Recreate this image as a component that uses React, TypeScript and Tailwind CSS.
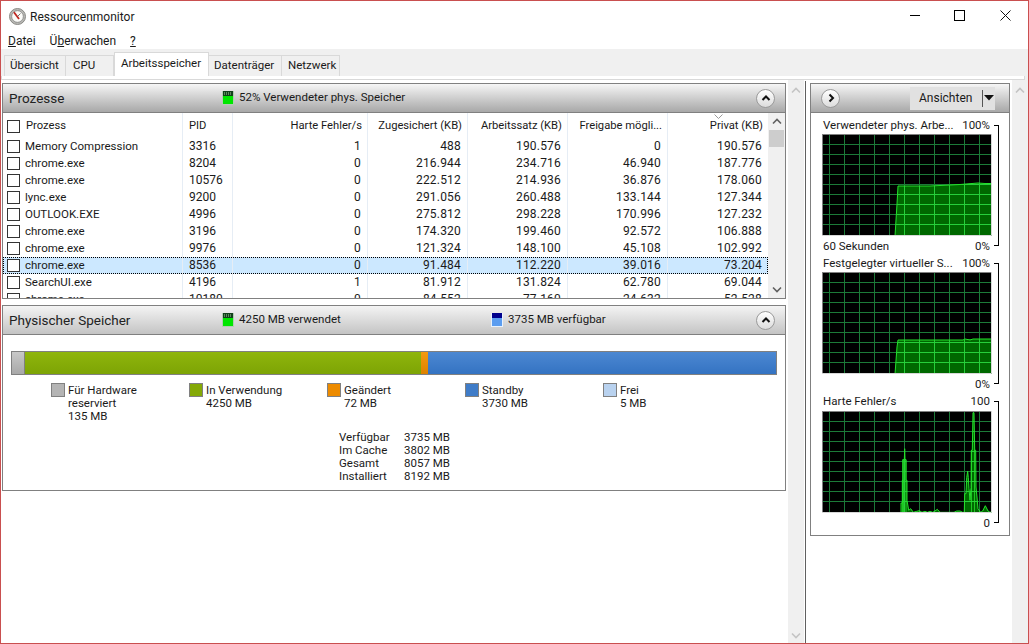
import { ReactNode } from "react";

const rows = [
  ["Memory Compression", "3316", "1", "488", "190.576", "0", "190.576"],
  ["chrome.exe", "8204", "0", "216.944", "234.716", "46.940", "187.776"],
  ["chrome.exe", "10576", "0", "222.512", "214.936", "36.876", "178.060"],
  ["lync.exe", "9200", "0", "291.056", "260.488", "133.144", "127.344"],
  ["OUTLOOK.EXE", "4996", "0", "275.812", "298.228", "170.996", "127.232"],
  ["chrome.exe", "3196", "0", "174.320", "199.460", "92.572", "106.888"],
  ["chrome.exe", "9976", "0", "121.324", "148.100", "45.108", "102.992"],
  ["chrome.exe", "8536", "0", "91.484", "112.220", "39.016", "73.204"],
  ["SearchUI.exe", "4196", "1", "81.912", "131.824", "62.780", "69.044"],
  ["chrome.exe", "10180", "0", "84.552", "77.160", "24.632", "52.528"],
];

const columns = ["PID", "Harte Fehler/s", "Zugesichert (KB)", "Arbeitssatz (KB)", "Freigabe mögli...", "Privat (KB)"];

const legend = [
  { color: "bg-[#b4b4b4]", lines: ["Für Hardware", "reserviert", "135 MB"] },
  { color: "bg-[#84a907]", lines: ["In Verwendung", "4250 MB"] },
  { color: "bg-[#ed8b00]", lines: ["Geändert", "72 MB"] },
  { color: "bg-[#3f7cc8]", lines: ["Standby", "3730 MB"] },
  { color: "bg-[#b9d2ef]", lines: ["Frei", "5 MB"] },
];

const stats = [
  ["Verfügbar", "3735 MB"],
  ["Im Cache", "3802 MB"],
  ["Gesamt", "8057 MB"],
  ["Installiert", "8192 MB"],
];

const Checkbox = () => <span className="block w-[13px] h-[13px] border border-[#333] bg-white shrink-0" />;

const Gauge = ({ blue }: { blue?: boolean }) => (
  <svg width="12" height="14" viewBox="0 0 12 14" className="shrink-0">
    <rect width="12" height="14" fill={blue ? "#e8f2fd" : "#b4ccb4"} />
    <rect x="1" y="0" width="10" height="5" fill={blue ? "#00008c" : "#12401c"} />
    <rect x="1" y="5" width="10" height="8" fill={blue ? "#5b9df0" : "#00e600"} />
    {!blue && [2, 4, 6, 8].map((x) => <rect key={x} x={x} y="1" width="1" height="3" fill="#5c8a5c" />)}
  </svg>
);

const RoundButton = ({ up }: { up?: boolean }) => (
  <span className="flex items-center justify-center w-[19px] h-[19px] rounded-full border border-[#9a9a9a] bg-gradient-to-b from-white to-[#dcdcdc]">
    <svg width="10" height="10" viewBox="0 0 10 10" fill="none" stroke="#111" strokeWidth="2">
      {up ? <path d="M1.5 7 5 3.5 8.5 7" /> : <path d="M3.5 1.5 7 5 3.5 8.5" />}
    </svg>
  </span>
);

const Chevron = ({ down, light }: { down?: boolean; light?: boolean }) => (
  <svg width="10" height="7" viewBox="0 0 10 7" fill="none" stroke={light ? "#c4c4c4" : "#606060"} strokeWidth="1.6" className="block">
    {down ? <path d="M1 1.5 5 5.5 9 1.5" /> : <path d="M1 5.5 5 1.5 9 5.5" />}
  </svg>
);

const gridX = [7, 22, 37, 52, 67, 82, 97, 112, 127, 142, 157];
const gridY = [10, 20, 30, 40, 50, 60, 70, 80, 90];

const Graph = ({ id, area, line, extra }: { id: string; area: string; line: string; extra?: ReactNode }) => (
  <svg width="170" height="102" viewBox="0 0 170 102" className="block bg-black">
    <defs>
      <clipPath id={id}>
        <path d={area} />
      </clipPath>
    </defs>
    {gridX.map((x) => (
      <line key={x} x1={x + 0.5} y1="0" x2={x + 0.5} y2="102" stroke="#1c7a38" />
    ))}
    {gridY.map((y) => (
      <line key={y} x1="0" y1={y + 0.5} x2="170" y2={y + 0.5} stroke="#1c7a38" />
    ))}
    <path d={area} fill="#006800" />
    <g clipPath={`url(#${id})`}>
      {gridX.map((x) => (
        <line key={x} x1={x + 0.5} y1="0" x2={x + 0.5} y2="102" stroke="#26cf3a" />
      ))}
      {gridY.map((y) => (
        <line key={y} x1="0" y1={y + 0.5} x2="170" y2={y + 0.5} stroke="#26cf3a" />
      ))}
    </g>
    {extra}
    <path d={line} fill="none" stroke="#25e02c" strokeWidth="1" />
    <path d="M0 102V0H170" fill="none" stroke="#808080" strokeWidth="2" />
    <path d="M0 101.5H169.5V0" fill="none" stroke="#d8d8d8" strokeWidth="1" />
  </svg>
);

const ChartBlock = ({
  title,
  top,
  left,
  bottom,
  children,
  className,
  gap,
}: {
  title: string;
  top: string;
  left?: string;
  bottom: string;
  children: ReactNode;
  className: string;
  gap: string;
}) => (
  <div className={`flex ${className}`}>
    <div className="w-[170px] flex flex-col">
      <div className={`flex justify-between h-[14px] leading-[14px] pl-[1px] pr-[2px] ${gap}`}>
        <span>{title}</span>
        <span>{top}</span>
      </div>
      {children}
      <div className="flex justify-between h-[14px] leading-[14px] pl-[1px] pr-[2px] mt-[3px]">
        <span>{left}</span>
        <span>{bottom}</span>
      </div>
    </div>
    <div className="ml-[2px] w-[5px] my-[7px] border-t border-r border-b border-black" />
  </div>
);

const spikes =
  "M79 102V92H80.3V69.3H81.3V48.7H82.3L82.7 37.7L83 48.7H84V69.3H85V89.3L86.7 99.3L88.7 97.7L91.3 101.3L94.7 100.3L97.3 99.7L100 101.3L103 100.3L105.3 101.3L108 100.3L110.7 101.3L113 100L115.3 98.3L118 101.3H132L134.7 100H138L140.7 101.3H142.3L142.7 82.7H144L144.7 66.7L145.7 60L146.3 66.7L147 77.7L148 89.3L149 76.7L149.3 39.3H150.3L151 1.7H152L152.7 39.3H153.7L154 76L155 86L156 97.7L158.7 101.3L160.7 100L163.3 94.7L166 100L168 101.3L169.7 100.7V102Z";

const tabBase = "h-[21px] border border-b-0 border-[#d9d9d9] bg-[#f0f0f0] flex items-center";

export default function App() {
  return (
    <div className="w-[1029px] h-[644px] flex flex-col bg-white border border-[#c94f4f] overflow-hidden font-[Roboto,sans-serif] text-[11.5px] text-[#1a1a1a]">
      {/* title bar */}
      <div className="h-[31px] flex items-center shrink-0">
        <svg width="17" height="17" viewBox="0 0 17 17" className="ml-[8px]">
          <circle cx="8.5" cy="8.5" r="8" fill="#b9b9b5" stroke="#8a8a86" />
          <circle cx="8.5" cy="8.5" r="5.8" fill="#fbfbf8" stroke="#6d6d6d" strokeWidth="0.6" />
          <path d="M5 4.2 10 11" stroke="#c0231c" strokeWidth="1.8" />
          <path d="M11.5 5.5 8.5 8.5" stroke="#555" strokeWidth="0.8" />
        </svg>
        <span className="ml-[4px] text-[12px]">Ressourcenmonitor</span>
        <div className="ml-auto flex items-center pr-[17px] pb-[2px]">
          <span className="block w-[10px] h-px bg-black mr-[34px]" />
          <span className="block w-[11px] h-[11px] border border-black mr-[35px]" />
          <svg width="11" height="11" viewBox="0 0 11 11" stroke="#111" strokeWidth="1">
            <path d="M0.5 0.5 10.5 10.5M10.5 0.5 0.5 10.5" />
          </svg>
        </div>
      </div>

      {/* menu */}
      <div className="h-[17px] flex items-center pl-[7px] gap-[14px] shrink-0 text-[12px]">
        <span>
          <span className="underline">D</span>atei
        </span>
        <span>
          Ü<span className="underline">b</span>erwachen
        </span>
        <span className="underline">?</span>
      </div>

      {/* tabs */}
      <div className="h-[31px] bg-[#f0f0f0] shrink-0 pt-[3px] pr-[3px]">
        <div className="flex items-end h-[24px] pl-[3px]">
          <div className={`${tabBase} w-[62px] pl-[5px]`}>Übersicht</div>
          <div className={`${tabBase} w-[48px] border-l-0 pl-[7px]`}>CPU</div>
          <div className="h-[24px] w-[95px] border border-b-0 border-[#d9d9d9] bg-white flex items-center pl-[6px] pb-[2px]">Arbeitsspeicher</div>
          <div className={`${tabBase} w-[73px] border-l-0 pl-[5px]`}>Datenträger</div>
          <div className={`${tabBase} w-[58px] border-l-0 pl-[6px]`}>Netzwerk</div>
        </div>
        <div className="h-[4px] bg-white border-b border-x border-[#d9d9d9]" />
      </div>

      {/* content */}
      <div className="flex-1 flex min-h-0">
        {/* left column */}
        <div className="w-[785px] pl-[1px] pt-[3px] shrink-0 flex flex-col">
          <section className="w-[784px] h-[216px] border border-[#808080] flex flex-col">
            <div className="h-[29px] shrink-0 flex items-center border-b border-[#808080] bg-gradient-to-b from-[#f6f6f6] to-[#a8a8a8] pl-[6px] pr-[10px]">
              <span className="text-[13.5px] w-[213px] text-[#222]">Prozesse</span>
              <Gauge />
              <span className="ml-[5px]">52% Verwendeter phys. Speicher</span>
              <span className="ml-auto">
                <RoundButton up />
              </span>
            </div>
            <div className="flex flex-1 min-h-0">
              <div className="w-[765px] overflow-hidden relative">
                <div className="grid grid-cols-[180px_50px_135px_100px_100px_100px_100px] h-[25px] items-stretch text-[11.2px]">
                  <div className="flex items-center gap-[6px] pl-[4px] pt-[1px] border-r border-[#e6edf5]">
                    <Checkbox />
                    <span>Prozess</span>
                  </div>
                  {columns.map((c, i) => (
                    <div
                      key={c}
                      className={
                        i === 0
                          ? "flex items-center pl-[6px] pt-[1px] border-r border-[#e6edf5]"
                          : "flex items-center justify-end pr-[5px] pt-[1px] border-r border-[#e6edf5] last:border-r-0"
                      }
                    >
                      {c}
                    </div>
                  ))}
                </div>
                <svg width="9" height="5" viewBox="0 0 9 5" fill="none" stroke="#999" className="absolute top-[1px] left-[711px]">
                  <path d="M0.5 0.5 4.5 4.5 8.5 0.5" />
                </svg>
                {rows.map((r, i) => (
                  <div
                    key={r[1]}
                    className={
                      i === 7
                        ? "grid grid-cols-[180px_50px_135px_100px_100px_100px_100px] h-[17px] items-center bg-[#cce8ff] outline-1 outline-dotted -outline-offset-1 outline-black"
                        : "grid grid-cols-[180px_50px_135px_100px_100px_100px_100px] h-[17px] items-center"
                    }
                  >
                    <div className="flex items-center gap-[5px] pl-[4px] h-[17px] border-r border-[#e6edf5]">
                      <Checkbox />
                      <span>{r[0]}</span>
                    </div>
                    <div className="pl-[6px] h-[17px] leading-[17px] border-r border-[#e6edf5] text-[12px]">{r[1]}</div>
                    {r.slice(2).map((v, j) => (
                      <div key={j} className="text-right pr-[6px] h-[17px] leading-[17px] border-r border-[#e6edf5] last:border-r-0 text-[12px] tracking-[0.2px]">
                        {v}
                      </div>
                    ))}
                  </div>
                ))}
              </div>
              <div className="flex-1 bg-[#f0f0f0] flex flex-col items-center pt-[5px] pb-[5px]">
                <Chevron />
                <div className="w-[15px] h-[17px] bg-[#cdcdcd] mt-[5px]" />
                <span className="mt-auto">
                  <Chevron down />
                </span>
              </div>
            </div>
          </section>

          <section className="w-[784px] h-[186px] mt-[6px] border border-[#808080] flex flex-col">
            <div className="h-[29px] shrink-0 flex items-center border-b border-[#808080] bg-gradient-to-b from-[#f4f4f4] to-[#c4c4c4] pl-[6px] pr-[10px]">
              <span className="text-[13.5px] w-[213px] text-[#222]">Physischer Speicher</span>
              <Gauge />
              <span className="ml-[5px] w-[252px]">4250 MB verwendet</span>
              <Gauge blue />
              <span className="ml-[5px]">3735 MB verfügbar</span>
              <span className="ml-auto">
                <RoundButton up />
              </span>
            </div>
            <div className="pl-[8px] pt-[16px]">
              <div className="w-[766px] h-[24px] border border-[#808080] flex">
                <div className="w-[13px] border-r border-[#808080] bg-gradient-to-b from-[#c8c8c8] to-[#a8a8a8]" />
                <div className="w-[396px] bg-gradient-to-b from-[#8fb50c] to-[#7da405]" />
                <div className="w-[7px] bg-gradient-to-b from-[#f59a10] to-[#dd8200]" />
                <div className="flex-1 bg-gradient-to-b from-[#4c88d2] to-[#3473c2]" />
              </div>
              <div className="flex pl-[40px] mt-[8px]">
                {legend.map((l) => (
                  <div key={l.lines[0]} className="w-[138px] flex gap-[3px]">
                    <span className={`block w-[14px] h-[14px] border border-[#808080] ${l.color}`} />
                    <div className="leading-[13px] pt-[1px] h-[48px]">
                      {l.lines.map((t) => (
                        <div key={t}>{t}</div>
                      ))}
                    </div>
                  </div>
                ))}
              </div>
              <div className="grid grid-cols-[65px_60px] ml-[328px] leading-[13px]">
                {stats.map(([k, v]) => [<div key={k}>{k}</div>, <div key={v}>{v}</div>])}
              </div>
            </div>
          </section>
        </div>

        {/* scrollbar of the left column */}
        <div className="w-[16px] ml-[2px] bg-[#f0f0f0] flex flex-col items-center pt-[7px] pb-[4px] shrink-0">
          <Chevron light />
          <span className="mt-auto">
            <Chevron down light />
          </span>
        </div>
        <div className="w-px bg-[#606060] ml-[1px] mt-[1px] shrink-0" />

        {/* right column */}
        <div className="flex-1 flex min-w-0 pl-[4px] pt-[3px]">
          <section className="w-[200px] h-[453px] border border-[#808080] flex flex-col">
            <div className="h-[29px] shrink-0 flex items-center border-b border-[#808080] bg-gradient-to-b from-[#f6f6f6] to-[#a8a8a8] pl-[10px]">
              <RoundButton />
              <div className="ml-[70px] w-[85px] h-[23px] bg-[#e1e1e1] flex items-center pl-[9px] text-[12px]">
                <span>Ansichten</span>
                <span className="block w-px h-[17px] bg-[#555] ml-auto" />
                <svg width="12" height="8" viewBox="0 0 12 8">
                  <path d="M1 1H11L6 6.5Z" fill="#111" />
                </svg>
              </div>
            </div>
            <div className="pl-[11px] pt-[5px]">
              <ChartBlock title="Verwendeter phys. Arbe..." top="100%" left="60 Sekunden" bottom="0%" className="mb-[3px]" gap="mb-[2px]">
                <Graph id="g1" area="M73 102L75 70L76 52H108L138 50.5L156 49H170V102Z" line="M73 102L75 70L76 52H108L138 50.5L156 49L163 49.5H170" />
              </ChartBlock>
              <ChartBlock title="Festgelegter virtueller S..." top="100%" bottom="0%" className="mb-[3px]" gap="mb-[2px]">
                <Graph id="g2" area="M73 102L75 75L76 68H141L146 67H170V102Z" line="M73 102L75 75L76 68H141L143 67L148 68L151 67H170" />
              </ChartBlock>
              <ChartBlock title="Harte Fehler/s" top="100" bottom="0" className="" gap="mb-[3px]">
                <Graph
                  id="g3"
                  area={spikes}
                  line={spikes}
                  extra={<path d="M80.5 102V48.7H84V102M81.5 102V69M149.5 102V39M152.5 102V39" fill="none" stroke="#25e02c" strokeWidth="0.8" />}
                />
              </ChartBlock>
            </div>
          </section>
          <div className="ml-[2px] flex-1 bg-[#f0f0f0] flex flex-col items-center pt-[7px] -mt-[3px]">
            <Chevron light />
          </div>
        </div>
      </div>
    </div>
  );
}
